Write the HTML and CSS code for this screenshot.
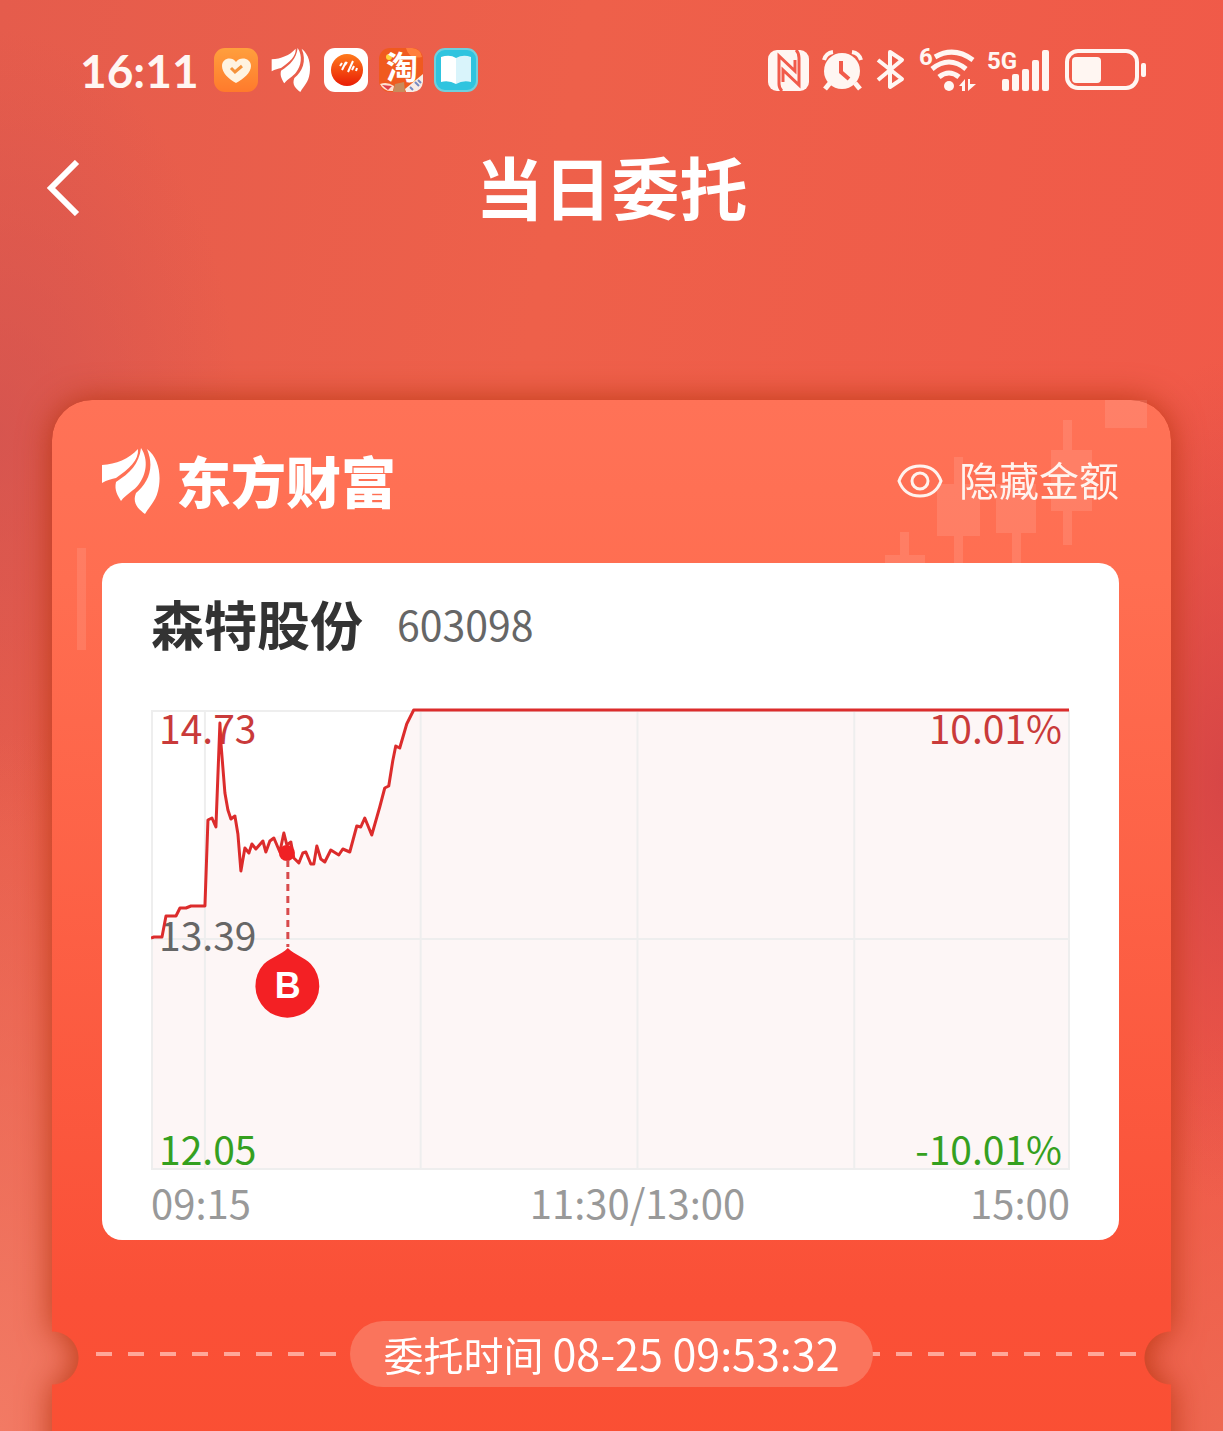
FILE: index.html
```html
<!DOCTYPE html>
<html lang="zh-CN">

<head>
    <meta charset="UTF-8">
    <meta name="viewport" content="width=device-width, initial-scale=1.0">
    <title>当日委托</title>
    <link rel="stylesheet" href="styles.css">
</head>

<body>
    <svg width="0" height="0" class="defs" aria-hidden="true">
        <symbol id="feather" viewBox="0 0 58 66">
            <path d="M0 17 C14 16 27 11 36 1 C37 12 27 21 14 30 C10 31 5 32 0 35 Z" />
            <path d="M39 0 C47 12 44 27 37 36 C32 43 24 46 19 53 C16 48 12 42 14 34 C28 25 37 16 39 0 Z" />
            <path d="M45 1 C56 9 59 25 57 38 C55 52 49 56 43 66 C36 61 30 55 34 45 C46 35 53 20 45 1 Z" />
        </symbol>
    </svg>

    <div class="status-bar">
        <div class="status-left">
            <span class="clock">16:11</span>
            <svg class="app-icon" viewBox="0 0 44 44">
                <defs>
                    <linearGradient id="orange" x2="0" y2="1">
                        <stop stop-color="#ff9f3d" />
                        <stop offset="1" stop-color="#ff7a2c" />
                    </linearGradient>
                </defs>
                <rect width="44" height="44" rx="11" fill="url(#orange)" />
                <path d="M22 35 C15 31 8 25 8 18 C8 10 18 8 22 14 C26 8 37 10 37 18 C37 25 29 31 22 35 Z" fill="#fff3e0" />
                <path d="M17 20 L21 24 L28 18" fill="none" stroke="#f59239" stroke-width="3" />
            </svg>
            <svg class="app-icon feather"><use href="#feather" /></svg>
            <svg class="app-icon" viewBox="0 0 44 44">
                <defs>
                    <linearGradient id="ball" x2="0" y2="1">
                        <stop stop-color="#ff7a1c" />
                        <stop offset="1" stop-color="#e91d05" />
                    </linearGradient>
                </defs>
                <rect width="44" height="44" rx="11" fill="#fff" />
                <circle cx="23" cy="22" r="16" fill="url(#ball)" />
                <path d="M16 18 L18 15 M18 22 L22 14 M21 17 L23 14 M24 24 L29 13 M28 22 L30 18 M32 23 L33 20" stroke="#fff" stroke-width="2" />
            </svg>
            <svg class="app-icon" viewBox="0 0 44 44">
                <rect width="44" height="44" rx="11" fill="#f05a1f" />
                <path d="M27 0 H33 Q42 1 43 9 Q30 12 27 0 Z" fill="#ff7f3b" />
                <circle cx="10" cy="9" r="3" fill="#ffd23c" />
                <path d="M1 36 Q8 33 15 38 L14 43 Q5 44 1 36 Z" fill="#ffe0cf" />
                <path d="M3 37 L13 38 L9 42 Z" fill="#e0404a" />
                <path d="M16 36 L25 34 L26 44 L14 44 Z" fill="#c88b5c" />
                <path d="M26 41 L44 26 V34 Q43 43 34 44 H27 Z" fill="#f7ece6" />
                <path d="M31 39 L34 42 M36 34 L40 38 M39 32 L42 35" stroke="#778ac0" stroke-width="2" />
                <text x="23" y="31" class="tao">淘</text>
            </svg>
            <svg class="app-icon" viewBox="0 0 44 44">
                <rect x="1" y="1" width="42" height="42" rx="10" fill="#2fc4df" stroke="#6fd0dd" stroke-width="2" />
                <path d="M7 9 Q16 6 22 10 V36 Q15 32 7 34 Z" fill="#fff" />
                <path d="M22 10 Q29 6 37 9 V34 Q29 32 22 36 Z" fill="#d9f4fb" />
            </svg>
        </div>

        <div class="status-right">
            <!-- NFC -->
            <svg width="41" height="41" viewBox="0 0 41 41">
                <rect width="41" height="41" rx="9" fill="#fff6f2" />
                <g fill="none" stroke="#f15b4b" stroke-width="3">
                    <path d="M14 41 Q11 38 11 34 V6 L27 21 V10" />
                    <path d="M28 0 Q31 3 31 8 V35 L15 20 V32" />
                </g>
            </svg>
            <!-- alarm -->
            <svg width="41" height="42" viewBox="0 0 41 42">
                <circle cx="20" cy="22" r="18" fill="#fff6f2" />
                <path d="M2 11 Q4 4 11 3 M30 3 Q37 4 39 11" fill="none" stroke="#fff6f2" stroke-width="4" />
                <path d="M8 34 L3 40 M33 34 L38 40" stroke="#fff6f2" stroke-width="5" />
                <path d="M19 12 V23 L27 30" fill="none" stroke="#f15b4b" stroke-width="4" />
            </svg>
            <!-- bluetooth -->
            <svg width="30" height="42" viewBox="0 0 30 42">
                <path d="M2 11 L26 30 L14 38 V3 L26 11 L2 31" fill="none" stroke="#fff6f2" stroke-width="4" stroke-linejoin="round" />
            </svg>
            <!-- wifi -->
            <svg width="58" height="46" viewBox="0 0 58 46">
                <text x="0" y="18" class="net">6</text>
                <g fill="none" stroke="#fff6f2" stroke-width="5">
                    <path d="M16 10 Q35 -1 54 13" />
                    <path d="M13 22 Q30 8 47 22" />
                    <path d="M20 30 Q30 22 40 30" />
                </g>
                <circle cx="30" cy="39" r="5" fill="#fff6f2" />
                <path d="M40 39 L46 32 V44 H43 V39 Z M49 32 H51 V37 H57 L49 44 Z" fill="#fff6f2" />
            </svg>
            <!-- signal -->
            <svg width="62" height="44" viewBox="0 0 62 44">
                <text x="-3" y="21" class="net">5G</text>
                <g fill="#fff6f2">
                    <rect x="12" y="31" width="7" height="12" rx="2" />
                    <rect x="22" y="26" width="7" height="17" rx="2" />
                    <rect x="32" y="21" width="7" height="22" rx="2" />
                    <rect x="42" y="12" width="7" height="31" rx="2" />
                    <rect x="52" y="2" width="7" height="41" rx="2" />
                </g>
            </svg>
            <!-- battery -->
            <svg width="82" height="42" viewBox="0 0 82 42">
                <rect x="2" y="2" width="70" height="37" rx="11" fill="none" stroke="#fff6f2" stroke-width="4" />
                <rect x="7" y="8" width="29" height="26" rx="4" fill="#fff6f2" />
                <rect x="76" y="14" width="5" height="14" rx="2" fill="#fff6f2" />
            </svg>
        </div>
    </div>

    <header class="nav">
        <button class="back" aria-label="返回">
            <svg width="34" height="56" viewBox="0 0 34 56">
                <path d="M31 2 L5 28 L31 54" fill="none" stroke="#fff" stroke-width="6" />
            </svg>
        </button>
        <h1>当日委托</h1>
    </header>

    <main class="ticket">
        <svg class="candles" width="290" height="170" viewBox="-19 0 290 170" fill="#fff">
            <path d="M205 0 H247 V28 H205 Z M163 20 H172 V50 H192 V111 H172 V145 H163 V111 H151 V50 H163 Z" />
            <path d="M54 57 H63 V84 H80 V136 H63 V170 H54 V136 H37 V84 H54 Z M96 84 H136 V133 H121 V170 H112 V133 H96 Z" />
            <path d="M0 132 H9 V155 H25 V170 H-15 V155 H0 Z" />
        </svg>
        <div class="ticket-head">
            <div class="brand">
                <svg class="brand-mark feather"><use href="#feather" /></svg>
                <span>东方财富</span>
            </div>
            <button class="hide-amount">
                <svg width="46" height="34" viewBox="0 0 46 34" fill="none" stroke="#fff3ee" stroke-width="3">
                    <path d="M2 17 C6 6 14 2 23 2 C32 2 40 6 44 17 C40 28 32 32 23 32 C14 32 6 28 2 17 Z" />
                    <circle cx="23" cy="17" r="8" />
                </svg>
                <span>隐藏金额</span>
            </button>
        </div>

        <section class="card">
            <div class="stock">
                <h2>森特股份</h2>
                <span class="code">603098</span>
            </div>
            <div class="chart">
                <svg viewBox="0 0 920 465" preserveAspectRatio="none">
                    <path class="area" d="M0 233 L12 232 L15 211 L25 211 L29 203 L54 201 L57 115 L65 122 L69 18 L74 88 L80 114 L84 111 L90 166 L98 148 L123 133 L133 128 L143 153 L160 159 L174 157 L199 147 L206 121 L214 113 L221 130 L234 83 L238 81 L245 41 L249 43 L263 5 H919 V465 H0 Z" />
                    <path class="grid" d="M1 6 H919 V464 H1 Z M54 6 V464 M270 6 V464 M487 6 V464 M704 6 V464 M1 234 H919" />
                </svg>
                <span class="label high">14.73</span>
                <span class="label mid">13.39</span>
                <span class="label low">12.05</span>
                <span class="label high right">10.01%</span>
                <span class="label low right">-10.01%</span>
                <svg viewBox="0 0 920 465" preserveAspectRatio="none">
                    <path class="line" d="M0 233 L3 232 H11 L15 211 H25 L29 203 H35 L40 201 H54 L57 115 L61 113 L65 122 L69 18 L70 38 L74 88 L77 105 L80 114 L84 111 L87 129 L90 166 L94 143 L98 148 L101 139 L105 144 L112 136 L115 147 L119 136 L123 133 L129 147 L133 128 L136 140 L140 137 L143 153 L148 158 L152 148 L155 147 L160 159 L163 159 L166 141 L170 154 L174 157 L180 145 L188 150 L192 144 L199 147 L206 121 L210 122 L214 113 L221 130 L229 102 L234 83 L238 81 L242 56 L245 41 L249 43 L256 19 L263 5 H919" />
                    <circle cx="136" cy="148" r="8" fill="#f02024" />
                    <path d="M137 155 V242" stroke="#d84a4c" stroke-width="3" stroke-dasharray="7 5" />
                    <path d="M137 243 C144 250 153 252 160 259 A32 32 0 1 1 113 259 C121 252 130 250 137 243 Z" fill="#f32024" />
                    <text x="137" y="293" class="buy">B</text>
                </svg>
            </div>
            <div class="times">
                <span>09:15</span>
                <span class="noon">11:30/13:00</span>
                <span>15:00</span>
            </div>
        </section>

        <div class="tear">
            <span class="order-time">委托时间 <time>08-25 09:53:32</time></span>
        </div>
    </main>
</body>

</html>
```
FILE: styles.css
```css
* {
    box-sizing: border-box;
}

html {
    overflow-x: hidden;
}

body {
    margin: 0;
    min-height: 100vh;
    display: flex;
    flex-direction: column;
    overflow: hidden;
    font-family: "Noto Sans CJK SC", sans-serif;
    color: #fff;
    background:
        radial-gradient(ellipse 240px 400px at 0 430px, rgba(208, 82, 80, 0.7), transparent),
        radial-gradient(ellipse 160px 420px at 100% 780px, rgba(212, 68, 70, 0.9), transparent),
        radial-gradient(ellipse 300px 700px at 0 100%, #f27a64, transparent),
        radial-gradient(ellipse 200px 400px at 100% 100%, #ee6851, transparent),
        linear-gradient(100deg, #e55c4c 0%, #ee604a 40%, #f15848 100%);
}

button {
    padding: 0;
    border: 0;
    background: none;
    color: inherit;
    font-family: inherit;
    cursor: pointer;
}

svg {
    display: block;
}

.defs {
    position: absolute;
}

.feather {
    fill: #fff;
}

.status-bar {
    display: flex;
    justify-content: space-between;
    align-items: center;
    height: 140px;
    padding: 0 76px 0 80px;
}

.status-left,
.status-right {
    display: flex;
    align-items: center;
    gap: 11px;
}

.status-right {
    gap: 13px;
}

.status-right svg {
    overflow: visible;
}

.clock {
    margin-right: 4px;
    font-family: Lato, sans-serif;
    font-size: 46px;
    font-weight: bold;
    color: #fff6f2;
}

.app-icon {
    width: 44px;
    height: 44px;
    overflow: visible;
}

.tao {
    font-size: 32px;
    font-weight: bold;
    text-anchor: middle;
    fill: #fff;
}

.net {
    font-family: Roboto, sans-serif;
    font-size: 24px;
    font-weight: bold;
    fill: #fff6f2;
}

.nav {
    display: grid;
    grid-template-columns: 34px 1fr 34px;
    align-items: center;
    height: 96px;
    padding: 0 46px;
}

.nav h1 {
    margin: 0;
    font-size: 68px;
    line-height: 92px;
    padding-bottom: 4px;
    text-align: center;
}

.ticket {
    position: relative;
    flex: 1;
    margin: 164px 52px 0;
    padding: 36px 52px 44px 50px;
    filter: drop-shadow(0 0 16px rgba(176, 48, 8, 0.8));
}

/* ticket paper with the two round notches cut out, runs past the page end */
.ticket::before {
    content: "";
    position: absolute;
    inset: 0 0 -60px;
    border-radius: 40px 40px 0 0;
    background: linear-gradient(#ff7257, #ff6e51 180px, #fa5037 900px, #fa4f32);
    mask:
        radial-gradient(circle at 0 958px, transparent 26px, #000 27px),
        radial-gradient(circle at 100% 958px, transparent 26px, #000 27px);
    mask-composite: intersect;
}

.ticket::after {
    content: "";
    position: absolute;
    top: 148px;
    left: 25px;
    width: 9px;
    height: 102px;
    background: rgba(255, 255, 255, 0.1);
}

.candles {
    position: absolute;
    top: 0;
    right: 0;
    opacity: 0.1;
}

.ticket-head {
    position: relative;
    display: flex;
    justify-content: space-between;
    align-items: center;
    height: 90px;
    margin-bottom: 37px;
}

.brand {
    display: flex;
    align-items: center;
    gap: 16px;
    font-size: 55px;
    font-weight: 900;
}

.brand span {
    padding-bottom: 4px;
    line-height: 84px;
}

.brand-mark {
    width: 58px;
    height: 66px;
}

.hide-amount {
    display: flex;
    align-items: center;
    gap: 16px;
    font-size: 40px;
    line-height: 56px;
    color: #fff3ee;
}

.hide-amount span {
    padding-bottom: 4px;
}

.card {
    position: relative;
    padding: 20px 49px 5px;
    border-radius: 20px;
    background: #fff;
}

.stock {
    display: flex;
    align-items: center;
    gap: 34px;
    height: 80px;
    margin-bottom: 42px;
}

.stock h2 {
    margin: 0;
    font-size: 53px;
    color: #333;
}

.code {
    font-size: 41px;
    color: #666;
}

.chart {
    position: relative;
    height: 465px;
}

.chart svg {
    position: absolute;
    inset: 0;
    width: 100%;
    height: 100%;
}

.area {
    fill: #fdf6f6;
}

.grid {
    fill: none;
    stroke: #eee;
    stroke-width: 2;
}

.line {
    fill: none;
    stroke: #dc2c2c;
    stroke-width: 3;
    stroke-linejoin: round;
}

.buy {
    font-family: "Liberation Sans", sans-serif;
    font-size: 36px;
    font-weight: bold;
    text-anchor: middle;
    fill: #fff;
}

/* price and percent labels lie over the chart */
.label {
    position: absolute;
    left: 8px;
    font-size: 39px;
    line-height: 44px;
    color: #666;
}

.label.right {
    left: auto;
    right: 8px;
}

.high {
    top: 0;
    color: #c93a3a;
}

.mid {
    top: 207px;
}

.low {
    bottom: 0;
    color: #35a01f;
}

.times {
    display: flex;
    justify-content: space-between;
    font-size: 40px;
    line-height: 65px;
    color: #999;
}

.noon {
    margin-left: 54px;
}

.tear {
    position: relative;
    display: flex;
    justify-content: center;
    margin: 81px -24px 0 -22px;
    background: repeating-linear-gradient(90deg, transparent 0 16px, #ffa799 16px 32px) center / 100% 4px no-repeat;
}

.order-time {
    padding: 0 33px;
    border-radius: 33px;
    background: #fa745c;
    font-size: 40px;
    line-height: 66px;
    white-space: nowrap;
}

.order-time time {
    font-size: 43px;
    line-height: 60px;
}
```
